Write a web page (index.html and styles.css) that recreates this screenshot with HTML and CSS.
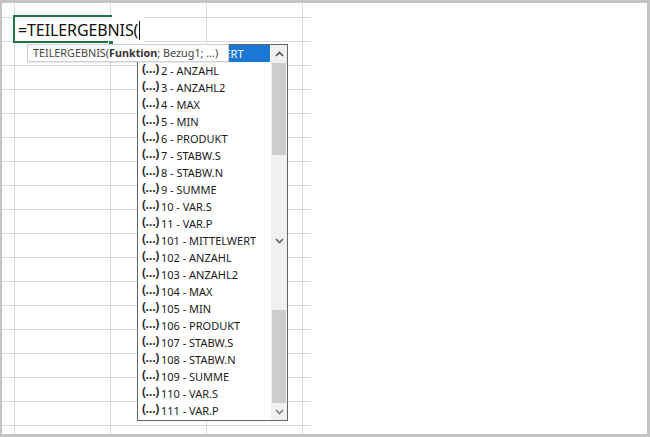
FILE: index.html
```html
<!DOCTYPE html>
<html lang="de">
<head>
<meta charset="utf-8">
<title>TEILERGEBNIS</title>
<link rel="stylesheet" href="styles.css">
</head>
<body>
<div class="frame">
  <div class="sheet">
    <div class="grid">
      <div class="c c0 r0"></div><div class="c r0"></div><div class="c r0"></div><div class="c r0"></div><div class="c cl r0"></div><div class="c cx r0"></div>
      <div class="c c0"></div><div class="c"></div><div class="c"></div><div class="c"></div><div class="c cl"></div><div class="c cx"></div>
      <div class="c c0"></div><div class="c"></div><div class="c"></div><div class="c"></div><div class="c cl"></div><div class="c cx"></div>
      <div class="c c0"></div><div class="c"></div><div class="c"></div><div class="c"></div><div class="c cl"></div><div class="c cx"></div>
      <div class="c c0"></div><div class="c"></div><div class="c"></div><div class="c"></div><div class="c cl"></div><div class="c cx"></div>
      <div class="c c0"></div><div class="c"></div><div class="c"></div><div class="c"></div><div class="c cl"></div><div class="c cx"></div>
      <div class="c c0"></div><div class="c"></div><div class="c"></div><div class="c"></div><div class="c cl"></div><div class="c cx"></div>
      <div class="c c0"></div><div class="c"></div><div class="c"></div><div class="c"></div><div class="c cl"></div><div class="c cx"></div>
      <div class="c c0"></div><div class="c"></div><div class="c"></div><div class="c"></div><div class="c cl"></div><div class="c cx"></div>
      <div class="c c0"></div><div class="c"></div><div class="c"></div><div class="c"></div><div class="c cl"></div><div class="c cx"></div>
      <div class="c c0"></div><div class="c"></div><div class="c"></div><div class="c"></div><div class="c cl"></div><div class="c cx"></div>
      <div class="c c0"></div><div class="c"></div><div class="c"></div><div class="c"></div><div class="c cl"></div><div class="c cx"></div>
      <div class="c c0"></div><div class="c"></div><div class="c"></div><div class="c"></div><div class="c cl"></div><div class="c cx"></div>
      <div class="c c0"></div><div class="c"></div><div class="c"></div><div class="c"></div><div class="c cl"></div><div class="c cx"></div>
      <div class="c c0"></div><div class="c"></div><div class="c"></div><div class="c"></div><div class="c cl"></div><div class="c cx"></div>
      <div class="c c0"></div><div class="c"></div><div class="c"></div><div class="c"></div><div class="c cl"></div><div class="c cx"></div>
      <div class="c c0"></div><div class="c"></div><div class="c"></div><div class="c"></div><div class="c cl"></div><div class="c cx"></div>
      <div class="c c0"></div><div class="c"></div><div class="c"></div><div class="c"></div><div class="c cl"></div><div class="c cx"></div>
      <div class="c c0 rl"></div><div class="c rl"></div><div class="c rl"></div><div class="c rl"></div><div class="c cl rl"></div><div class="c cx rl"></div>
    </div>

    <div class="editor"><span class="formula">=TEILERGEBNIS(</span><span class="caret"></span></div>
    <div class="sel-border"></div>
    <div class="fill-handle"></div>

    <div class="dropdown">
      <ul class="list">
        <li class="item selected"><span class="fx">(…)</span>1 - MITTELWERT</li>
        <li class="item"><span class="fx">(…)</span>2 - ANZAHL</li>
        <li class="item"><span class="fx">(…)</span>3 - ANZAHL2</li>
        <li class="item"><span class="fx">(…)</span>4 - MAX</li>
        <li class="item"><span class="fx">(…)</span>5 - MIN</li>
        <li class="item"><span class="fx">(…)</span>6 - PRODUKT</li>
        <li class="item"><span class="fx">(…)</span>7 - STABW.S</li>
        <li class="item"><span class="fx">(…)</span>8 - STABW.N</li>
        <li class="item"><span class="fx">(…)</span>9 - SUMME</li>
        <li class="item"><span class="fx">(…)</span>10 - VAR.S</li>
        <li class="item"><span class="fx">(…)</span>11 - VAR.P</li>
        <li class="item"><span class="fx">(…)</span>101 - MITTELWERT</li>
        <li class="item"><span class="fx">(…)</span>102 - ANZAHL</li>
        <li class="item"><span class="fx">(…)</span>103 - ANZAHL2</li>
        <li class="item"><span class="fx">(…)</span>104 - MAX</li>
        <li class="item"><span class="fx">(…)</span>105 - MIN</li>
        <li class="item"><span class="fx">(…)</span>106 - PRODUKT</li>
        <li class="item"><span class="fx">(…)</span>107 - STABW.S</li>
        <li class="item"><span class="fx">(…)</span>108 - STABW.N</li>
        <li class="item"><span class="fx">(…)</span>109 - SUMME</li>
        <li class="item"><span class="fx">(…)</span>110 - VAR.S</li>
        <li class="item"><span class="fx">(…)</span>111 - VAR.P</li>
      </ul>
      <div class="scrollbar">
        <div class="arrow"><svg width="9" height="6" viewBox="0 0 9 6"><polyline points="1,5 4.5,1.5 8,5" fill="none" stroke="#505050" stroke-width="1.6"/></svg></div>
        <div class="thumb t1"></div>
        <div class="track s1"></div>
        <div class="arrow"><svg width="9" height="6" viewBox="0 0 9 6"><polyline points="1,1 4.5,4.5 8,1" fill="none" stroke="#606060" stroke-width="1.6"/></svg></div>
        <div class="track s2"></div>
        <div class="thumb t2"></div>
        <div class="arrow"><svg width="9" height="6" viewBox="0 0 9 6"><polyline points="1,1 4.5,4.5 8,1" fill="none" stroke="#808080" stroke-width="1.6"/></svg></div>
      </div>
    </div>

    <div class="tooltip">TEILERGEBNIS(<b>Funktion</b>; Bezug1; ...)</div>
  </div>
</div>
</body>
</html>
```

FILE: styles.css
```css
* { box-sizing: border-box; }
html, body { margin: 0; padding: 0; background: #ffffff; }
.frame {
  width: 650px;
  height: 437px;
  border: 3px solid #c4c4c4;
  border-left-width: 2px;
  background: #ffffff;
}
.sheet {
  position: relative;
  width: 100%;
  height: 100%;
  font-family: "Noto Sans", "Open Sans", sans-serif;
}
.grid {
  display: grid;
  grid-template-columns: 13px 96px 96px 96px 8px 1fr;
  grid-template-rows: 15px repeat(17, 24px) 1fr;
  height: 100%;
}
.c {
  border-right: 1px solid #d8d8d8;
  border-bottom: 1px solid #d8d8d8;
}
.c.cl { border-right: none; }
.c.cx { border: none; }
.c.rl { border-bottom: none; }

.editor {
  position: absolute;
  left: 11px;
  top: 14px;
  width: 131px;
  height: 26px;
  background: #ffffff;
  padding-left: 5px;
  display: flex;
  align-items: center;
}
.formula {
  font-size: 16px;
  color: #111;
  line-height: 20px;
  letter-spacing: -0.1px;
}
.caret {
  display: inline-block;
  width: 1px;
  height: 19px;
  background: #111;
  margin-left: 1px;
}
.sel-border {
  position: absolute;
  left: 11px;
  top: 12px;
  width: 99px;
  height: 28px;
  border: 2px solid #217346;
  border-right: none;
}
.fill-handle {
  position: absolute;
  left: 106px;
  top: 37px;
  width: 6px;
  height: 6px;
  background: #217346;
  border: 1px solid #ffffff;
}

.tooltip {
  position: absolute;
  left: 25px;
  top: 41px;
  width: 202px;
  height: 18px;
  background: #ffffff;
  border: 1px solid #cfcfcf;
  color: #444;
  font-size: 10.8px;
  line-height: 15px;
  padding-left: 5px;
  white-space: nowrap;
  overflow: hidden;
  box-shadow: 1px 1px 1px rgba(0,0,0,0.08);
}
.tooltip b { color: #333; font-weight: 700; }

.dropdown {
  position: absolute;
  left: 135px;
  top: 41px;
  width: 151px;
  height: 377px;
  border: 1px solid #666;
  background: #ffffff;
  display: flex;
}
.list {
  list-style: none;
  margin: 0;
  padding: 0;
  flex: 1;
}
.item {
  height: 17px;
  line-height: 17px;
  font-size: 11px;
  color: #1a1a1a;
  padding-left: 4px;
  white-space: nowrap;
  display: flex;
  align-items: center;
}
.item.selected {
  background: #1a78d4;
  color: #ffffff;
  margin-right: 1px;
}
.fx {
  font-size: 12px;
  font-weight: 700;
  color: #2a2a2a;
  margin-right: 2px;
  position: relative;
  top: -2px;
  letter-spacing: -0.5px;
}
.item.selected .fx { color: #ffffff; }
.scrollbar {
  width: 16px;
  background: #f0f0f0;
  display: flex;
  flex-direction: column;
}
.arrow {
  height: 17px;
  display: flex;
  align-items: center;
  justify-content: center;
}
.thumb {
  background: #cdcdcd;
  margin: 0 1px;
}
.t1 { height: 92px; margin-top: 1px; }
.s1 { height: 77px; }
.s2 { height: 61px; }
.t2 { height: 93px; }
```
